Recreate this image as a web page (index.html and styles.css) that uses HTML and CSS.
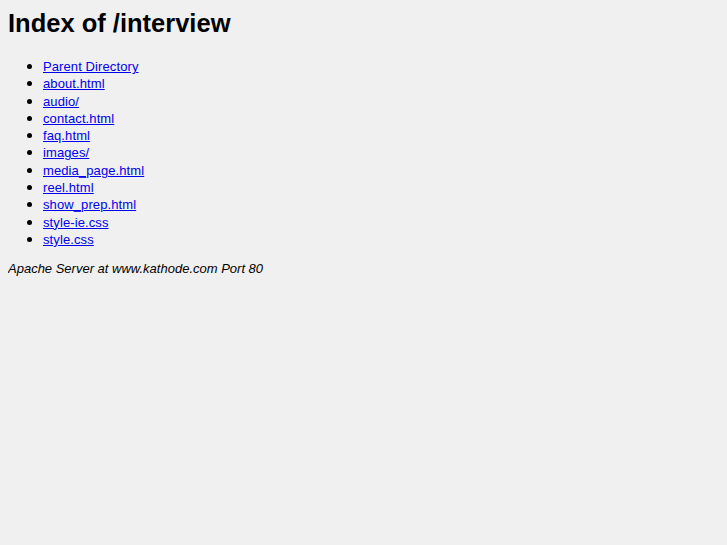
FILE: index.html
```html
<!DOCTYPE html>
<html>
<head>
<meta charset="utf-8">
<title>Index of /interview</title>
<link rel="stylesheet" href="styles.css">
</head>
<body>
<h1 class="title">Index of /interview</h1>
<ul class="listing">
<li><a href="#">Parent Directory</a></li>
<li><a href="#">about.html</a></li>
<li><a href="#">audio/</a></li>
<li><a href="#">contact.html</a></li>
<li><a href="#">faq.html</a></li>
<li><a href="#">images/</a></li>
<li><a href="#">media_page.html</a></li>
<li><a href="#">reel.html</a></li>
<li><a href="#">show_prep.html</a></li>
<li><a href="#">style-ie.css</a></li>
<li><a href="#">style.css</a></li>
</ul>
<address class="footer">Apache Server at www.kathode.com Port 80</address>
</body>
</html>
```
FILE: styles.css
```css
html { background: #f0f0f0; }
body {
  margin: 8px;
  font-family: "Liberation Sans", Arial, sans-serif;
  font-size: 13px;
  color: #000;
  background: #f0f0f0;
}
.title {
  margin: 0;
  font-size: 25.5px;
  font-weight: bold;
  line-height: 30px;
}
.listing {
  margin: 19px 0 13px 0;
  padding-left: 35px;
  line-height: 17.3px;
}
.listing li { height: 17.3px; }
.listing li::marker { font-size: 15px; }
.listing a { color: #0000ee; letter-spacing: 0.1px; }
.footer {
  font-style: italic;
  line-height: 17.3px;
}
```
